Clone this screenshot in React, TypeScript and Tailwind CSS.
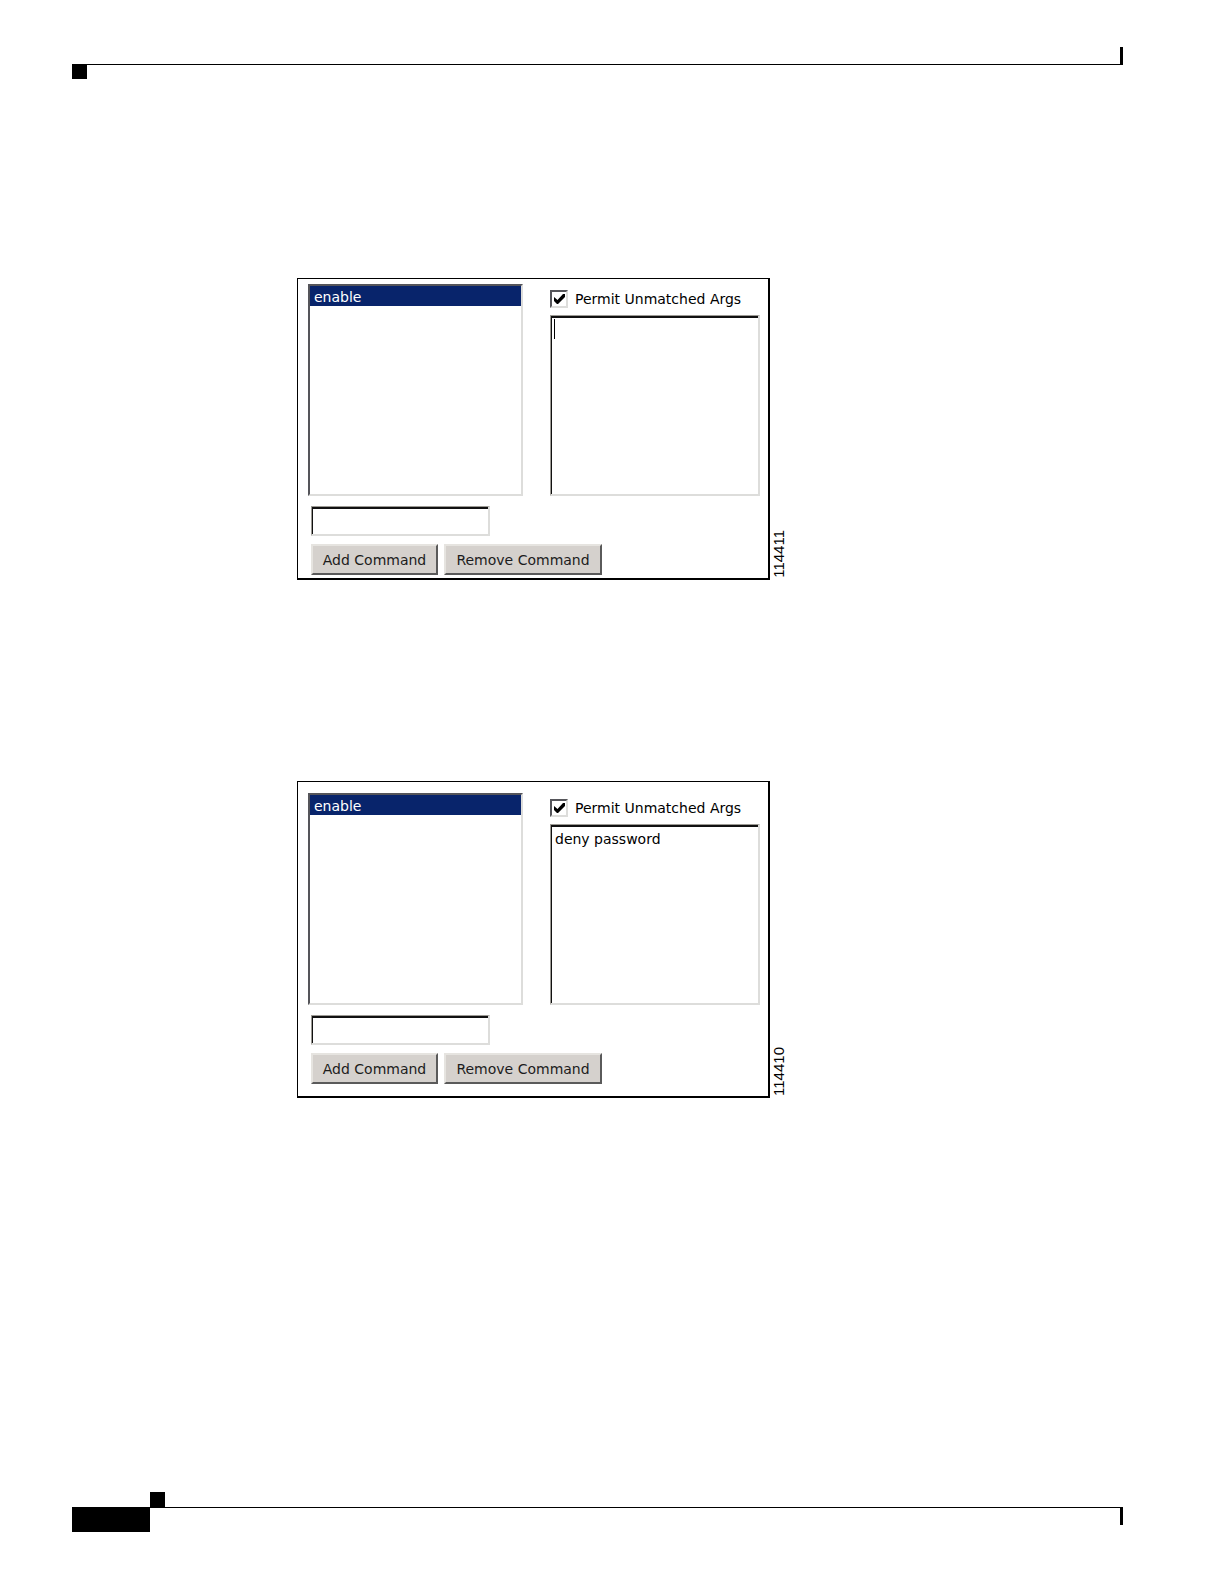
import { useState } from "react";
import clsx from "clsx";

type FigureProps = {
  id: string;
  initialArgs: string;
  focused?: boolean;
  className?: string;
};

const sunken =
  "border-2 border-t-[#55555a] border-l-[#55555a] border-r-[#dddddb] border-b-[#dddddb] bg-white outline-none rounded-none";

const field =
  "border border-r-2 border-b-2 border-t-[#9c9a94] border-l-[#9c9a94] border-r-[#dddddb] border-b-[#dddddb] bg-white shadow-[inset_1px_2px_0_#111111] outline-none rounded-none";

const raised =
  "h-[31px] border-2 border-t-[#e6e4e0] border-l-[#e6e4e0] border-r-[#5a5a5a] border-b-[#5a5a5a] bg-[#d5d1cd] text-sm text-[#1c1c1c]";

function CommandFigure({ id, initialArgs, focused, className }: FigureProps) {
  const [commands, setCommands] = useState(["enable"]);
  const [selected, setSelected] = useState("enable");
  const [draft, setDraft] = useState("");
  const [permit, setPermit] = useState(true);
  const [args, setArgs] = useState(initialArgs);

  const showCaret = focused && args === "";

  const addCommand = () => {
    if (!draft || commands.includes(draft)) return;
    setCommands([...commands, draft]);
    setDraft("");
  };

  return (
    <figure className="flex items-end gap-[2px]">
      <div
        className={clsx(
          "flex w-[473px] flex-col border border-r-2 border-b-2 border-black pl-[10px] pr-2",
          className
        )}
      >
        <div className="flex justify-between">
          <ul
            role="listbox"
            aria-label="Commands"
            className={clsx(sunken, "h-[212px] w-[215px]")}
          >
            {commands.map((c) => (
              <li
                key={c}
                role="option"
                aria-selected={c === selected}
                onClick={() => setSelected(c)}
                className={clsx(
                  "h-5 px-1 text-sm leading-[22px]",
                  c === selected && "bg-[#08246b] text-white"
                )}
              >
                {c}
              </li>
            ))}
          </ul>

          <div className="flex w-[210px] flex-col justify-between pt-[6px]">
            <div className="flex items-center gap-[7px]">
              <span className="relative size-[18px]">
                <input
                  id={`permit-${id}`}
                  type="checkbox"
                  checked={permit}
                  onChange={(e) => setPermit(e.target.checked)}
                  className={clsx(sunken, "block size-[18px] appearance-none")}
                />
                {permit && (
                  <svg
                    viewBox="0 0 18 18"
                    className="pointer-events-none absolute inset-0"
                  >
                    <path d="M4 7 L7.5 10 L13 4 H15 V7 L8 14 H7 L4 11 Z" />
                  </svg>
                )}
              </span>
              <label
                htmlFor={`permit-${id}`}
                className="text-sm leading-[18px] whitespace-nowrap"
              >
                Permit Unmatched Args
              </label>
            </div>
            <div className="relative">
              <textarea
                aria-label="Arguments"
                value={args}
                onChange={(e) => setArgs(e.target.value)}
                className={clsx(
                  field,
                  "block h-[181px] w-full resize-none px-1 py-1 text-sm leading-5",
                  showCaret && "caret-transparent"
                )}
              />
              {showCaret && (
                <span className="pointer-events-none absolute top-1 left-1 h-5 w-px bg-black" />
              )}
            </div>
          </div>
        </div>

        <input
          type="text"
          aria-label="New command"
          value={draft}
          onChange={(e) => setDraft(e.target.value)}
          className={clsx(field, "mt-[10px] ml-[3px] h-[30px] w-[179px] px-1 text-sm")}
        />
        <div className="mt-2 ml-[3px] flex gap-[6px]">
          <button type="button" onClick={addCommand} className={clsx(raised, "w-[127px]")}>
            Add Command
          </button>
          <button
            type="button"
            onClick={() => setCommands(commands.filter((c) => c !== selected))}
            className={clsx(raised, "w-[158px]")}
          >
            Remove Command
          </button>
        </div>
      </div>
      <figcaption className="rotate-180 pt-[2px] font-['Liberation_Sans',sans-serif] text-[15px] leading-[14px] [writing-mode:vertical-rl]">
        {id}
      </figcaption>
    </figure>
  );
}

export default function App() {
  return (
    <div className="flex min-h-screen flex-col bg-white pt-[47px] pr-[99px] pb-[52px] pl-[72px] font-['DejaVu_Sans',Verdana,sans-serif] text-black">
      <header>
        <div className="h-[18px] border-r-[3px] border-b border-black" />
        <div className="h-[14px] w-[15px] bg-black" />
      </header>

      <main className="flex grow flex-col gap-[201px] pt-[199px] pl-[225px]">
        <CommandFigure id="114411" initialArgs="" focused className="pt-[5px] pb-[3px]" />
        <CommandFigure id="114410" initialArgs="deny password" className="pt-[11px] pb-3" />
      </main>

      <footer>
        <div className="ml-[78px] size-[15px] bg-black" />
        <div className="flex items-start">
          <div className="h-[25px] w-[78px] bg-black" />
          <div className="h-[18px] grow border-t border-r-[3px] border-black" />
        </div>
      </footer>
    </div>
  );
}
